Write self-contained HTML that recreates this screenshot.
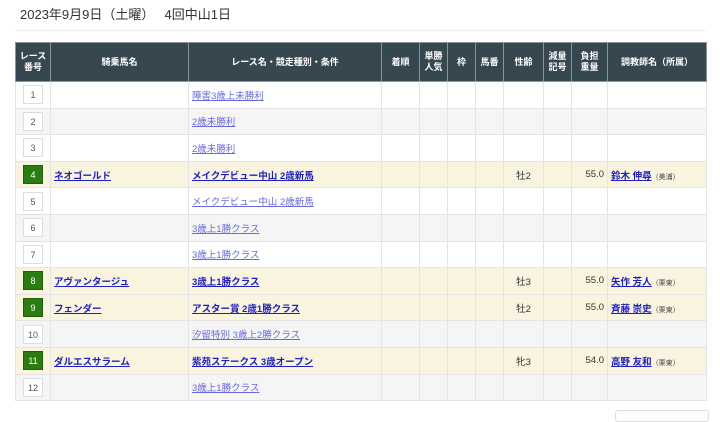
<!DOCTYPE html><html><head><meta charset="utf-8"><style>
body{margin:0;background:#fff;font-family:"Liberation Sans","Noto Sans CJK JP",sans-serif;width:720px;height:415px;overflow:hidden;position:relative}
.t{position:absolute;left:20px;top:4px;font-size:13px;color:#333}
.sep{position:absolute;left:15px;top:30px;width:691px;height:1px;background:#eee}
table{position:absolute;left:15px;top:42px;border-collapse:collapse;table-layout:fixed;width:691px;font-size:9.5px}
th{background:#37474f;color:#fff;height:38px;border:1px solid #8a969c;font-weight:bold;line-height:11px;padding:0;font-size:9px}
td{height:25.6px;border:1px solid #e4e4e4;padding:0 3px;color:#333}
tr.g td{background:#f5f5f5}tr.y td{background:#f8f4e0}
.n{display:inline-block;width:20px;height:19px;line-height:19px;text-align:center;border:1px solid #ddd;background:#fff;color:#555;font-size:9px;box-sizing:border-box}
.n.e{background:#2b7d12;color:#fff;border-color:#1f5e0d}
a{color:#3030d0;text-decoration:underline}a.l{color:#6a6ae0}a.b{font-weight:bold;color:#2020c0}
.c{text-align:center}.r{text-align:right}.s{font-size:7px;color:#444}
.bx{position:absolute;left:615px;top:410px;width:92px;height:10px;border:1px solid #ddd;border-radius:3px}
</style></head><body>
<div class="t">2023年9月9日（土曜）　 4回中山1日</div><div class="sep"></div>
<table><colgroup><col style="width:35px"><col style="width:138px"><col style="width:193px"><col style="width:38px"><col style="width:28px"><col style="width:28px"><col style="width:28px"><col style="width:40px"><col style="width:28px"><col style="width:36px"><col style="width:99px"></colgroup>
<tr><th>レース<br>番号</th><th>騎乗馬名</th><th>レース名・競走種別・条件</th><th>着順</th><th>単勝<br>人気</th><th>枠</th><th>馬番</th><th>性齢</th><th>減量<br>記号</th><th>負担<br>重量</th><th>調教師名（所属）</th></tr>
<tr><td class="c"><span class="n">1</span></td><td></td><td><a class="l">障害3歳上未勝利</a></td><td></td><td></td><td></td><td></td><td></td><td></td><td></td><td></td></tr>
<tr class="g"><td class="c"><span class="n">2</span></td><td></td><td><a class="l">2歳未勝利</a></td><td></td><td></td><td></td><td></td><td></td><td></td><td></td><td></td></tr>
<tr><td class="c"><span class="n">3</span></td><td></td><td><a class="l">2歳未勝利</a></td><td></td><td></td><td></td><td></td><td></td><td></td><td></td><td></td></tr>
<tr class="y"><td class="c"><span class="n e">4</span></td><td><a class="b">ネオゴールド</a></td><td><a class="b">メイクデビュー中山 2歳新馬</a></td><td></td><td></td><td></td><td></td><td class="c">牡2</td><td></td><td class="r">55.0</td><td><a class="b">鈴木 伸尋</a><span class="s">（美浦）</span></td></tr>
<tr><td class="c"><span class="n">5</span></td><td></td><td><a class="l">メイクデビュー中山 2歳新馬</a></td><td></td><td></td><td></td><td></td><td></td><td></td><td></td><td></td></tr>
<tr class="g"><td class="c"><span class="n">6</span></td><td></td><td><a class="l">3歳上1勝クラス</a></td><td></td><td></td><td></td><td></td><td></td><td></td><td></td><td></td></tr>
<tr><td class="c"><span class="n">7</span></td><td></td><td><a class="l">3歳上1勝クラス</a></td><td></td><td></td><td></td><td></td><td></td><td></td><td></td><td></td></tr>
<tr class="y"><td class="c"><span class="n e">8</span></td><td><a class="b">アヴァンタージュ</a></td><td><a class="b">3歳上1勝クラス</a></td><td></td><td></td><td></td><td></td><td class="c">牡3</td><td></td><td class="r">55.0</td><td><a class="b">矢作 芳人</a><span class="s">（栗東）</span></td></tr>
<tr class="y"><td class="c"><span class="n e">9</span></td><td><a class="b">フェンダー</a></td><td><a class="b">アスター賞 2歳1勝クラス</a></td><td></td><td></td><td></td><td></td><td class="c">牡2</td><td></td><td class="r">55.0</td><td><a class="b">斉藤 崇史</a><span class="s">（栗東）</span></td></tr>
<tr class="g"><td class="c"><span class="n">10</span></td><td></td><td><a class="l">汐留特別 3歳上2勝クラス</a></td><td></td><td></td><td></td><td></td><td></td><td></td><td></td><td></td></tr>
<tr class="y"><td class="c"><span class="n e">11</span></td><td><a class="b">ダルエスサラーム</a></td><td><a class="b">紫苑ステークス 3歳オープン</a></td><td></td><td></td><td></td><td></td><td class="c">牝3</td><td></td><td class="r">54.0</td><td><a class="b">高野 友和</a><span class="s">（栗東）</span></td></tr>
<tr class="g"><td class="c"><span class="n">12</span></td><td></td><td><a class="l">3歳上1勝クラス</a></td><td></td><td></td><td></td><td></td><td></td><td></td><td></td><td></td></tr>
</table><div class="bx"></div></body></html>
